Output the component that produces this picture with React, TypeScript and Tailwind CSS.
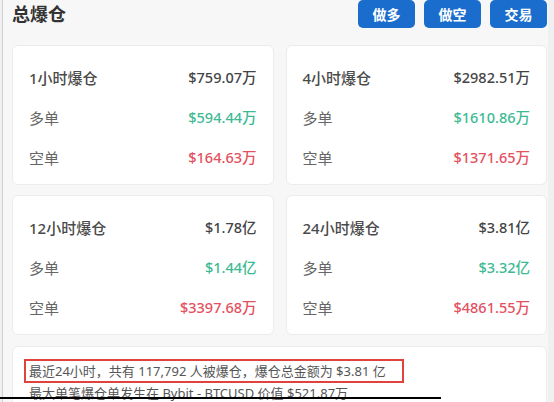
import React from 'react';

type Stat = { title: string; total: string; long: string; short: string };

const stats: Stat[] = [
  { title: '1小时爆仓', total: '$759.07万', long: '$594.44万', short: '$164.63万' },
  { title: '4小时爆仓', total: '$2982.51万', long: '$1610.86万', short: '$1371.65万' },
  { title: '12小时爆仓', total: '$1.78亿', long: '$1.44亿', short: '$3397.68万' },
  { title: '24小时爆仓', total: '$3.81亿', long: '$3.32亿', short: '$4861.55万' },
];

const font = { fontFamily: '"Noto Sans", "Noto Sans CJK SC", sans-serif' };

const StatCard: React.FC<{ s: Stat }> = ({ s }) => (
  <div className="flex flex-col gap-4 rounded-md border border-[#ececec] bg-white px-4 pt-5 pb-[14px]">
    <div className="flex h-6 items-center justify-between">
      <span className="text-[15px] font-medium text-[#4a4a4a]">{s.title}</span>
      <span className="text-[14.5px] font-medium text-[#444]">{s.total}</span>
    </div>
    <div className="flex h-6 items-center justify-between">
      <span className="text-[15px] text-[#666]">多单</span>
      <span className="text-[14.5px] font-medium text-[#3dba93]">{s.long}</span>
    </div>
    <div className="flex h-6 items-center justify-between">
      <span className="text-[15px] text-[#666]">空单</span>
      <span className="text-[14.5px] font-medium text-[#e4505e]">{s.short}</span>
    </div>
  </div>
);

export default function App() {
  const buttons = ['做多', '做空', '交易'];
  return (
    <div className="relative h-[402px] w-[554px] overflow-hidden bg-[#f0f0f0]" style={font}>
      <div className="ml-[2px] h-full w-[546px] border-l border-[#cfcfcf] bg-[#f7f7f7] pl-[9px] pr-px">
        <div className="flex h-[28px] items-center justify-between">
          <h1 className="text-[18px] font-bold text-[#333]">总爆仓</h1>
          <div className="flex gap-[9px]">
            {buttons.map((b) => (
              <button
                key={b}
                className="h-[28px] w-[57px] rounded-[5px] bg-[#1a6dcc] text-[14px] font-bold text-white"
              >
                {b}
              </button>
            ))}
          </div>
        </div>

        <div className="mt-[17px] grid grid-cols-2 gap-x-3 gap-y-[10px]">
          {stats.map((s) => (
            <StatCard key={s.title} s={s} />
          ))}
        </div>

        <div className="mt-[11px] rounded-md border border-[#ececec] bg-white px-4 pt-[12px] pb-3 text-[13px] leading-5 text-[#555]">
          <div className="-ml-[5px] inline-block border-2 border-[#e0433d] pl-[3px] pr-[16px]">
            最近24小时，共有 117,792 人被爆仓，爆仓总金额为 $3.81 亿
          </div>
          <div>最大单笔爆仓单发生在 Bybit - BTCUSD 价值 $521.87万</div>
        </div>
      </div>
      <div className="absolute bottom-[3px] left-0 h-[2px] w-[441px] bg-black" />
    </div>
  );
}
